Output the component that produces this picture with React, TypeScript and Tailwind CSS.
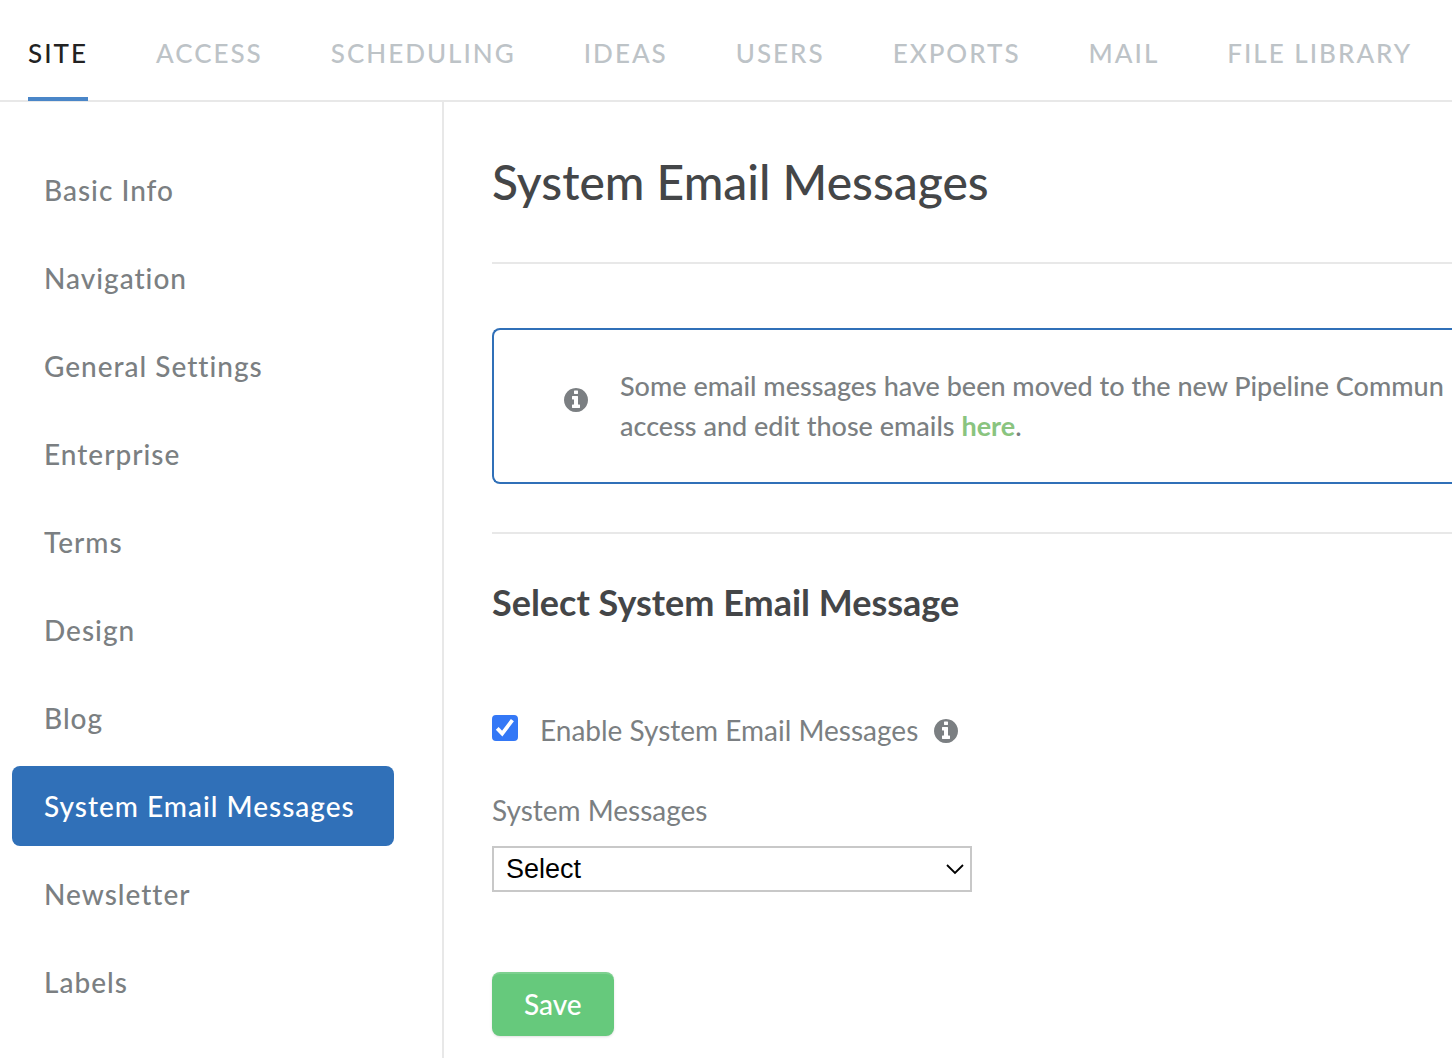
import * as React from "react";

const TABS = ["Site", "Access", "Scheduling", "Ideas", "Users", "Exports", "Mail", "File Library"];

const SECTIONS = [
  "Basic Info",
  "Navigation",
  "General Settings",
  "Enterprise",
  "Terms",
  "Design",
  "Blog",
  "System Email Messages",
  "Newsletter",
  "Labels",
];

function InfoIcon({ className }: { className?: string }) {
  return (
    <svg viewBox="128 128 1536 1536" fill="currentColor" aria-hidden="true" className={className}>
      <path d="M1152 1376v-160q0-14-9-23t-23-9h-96v-512q0-14-9-23t-23-9h-320q-14 0-23 9t-9 23v160q0 14 9 23t23 9h96v320h-96q-14 0-23 9t-9 23v160q0 14 9 23t23 9h448q14 0 23-9t9-23zM1024 480v-160q0-14-9-23t-23-9h-192q-14 0-23 9t-9 23v160q0 14 9 23t23 9h192q14 0 23-9t9-23zM1664 896q0 209-103 385.5t-279.5 279.5-385.5 103-385.5-103-279.5-279.5-103-385.5 103-385.5 279.5-279.5 385.5-103 385.5 103 279.5 279.5 103 385.5z" />
    </svg>
  );
}

function TopTabs({ active }: { active: string }) {
  return (
    <nav className="flex gap-[68px] border-b-2 border-[#e8e8e8] pl-7 text-[26px] leading-[34px] font-medium tracking-[2px] uppercase">
      {TABS.map((tab) => (
        <a
          key={tab}
          href="#"
          className={
            tab === active
              ? "-mb-px shrink-0 border-b-4 border-[#4a86c8] pt-9 pb-[27px] text-[#222]"
              : "shrink-0 pt-9 text-[#bdc3c7]"
          }
        >
          {tab}
        </a>
      ))}
    </nav>
  );
}

function Sidebar({ active }: { active: string }) {
  return (
    <aside className="w-[444px] shrink-0 border-r-2 border-[#e8e8e8] pt-12 pr-12 pl-3">
      <ul className="flex flex-col gap-2 text-[28px] leading-10 font-medium tracking-[1px]">
        {SECTIONS.map((section) => (
          <li key={section}>
            <a
              href="#"
              className={
                section === active
                  ? "block rounded-lg bg-[#3070b8] px-8 py-5 text-white"
                  : "block rounded-lg px-8 py-5"
              }
            >
              {section}
            </a>
          </li>
        ))}
      </ul>
    </aside>
  );
}

function Notice() {
  return (
    <div className="flex gap-8 rounded-l-lg border-2 border-r-0 border-[#3070b8] py-9 pl-[70px]">
      <InfoIcon className="mt-[22px] size-6 shrink-0" />
      <p className="text-[27px] leading-10 font-medium whitespace-nowrap">
        Some email messages have been moved to the new Pipeline Commun
        <br />
        access and edit those emails{" "}
        <a href="#" className="font-bold text-[#8ac47f]">
          here
        </a>
        .
      </p>
    </div>
  );
}

export default function App() {
  const [enabled, setEnabled] = React.useState(true);

  return (
    <div className="flex min-h-screen flex-col overflow-hidden bg-white font-[Lato,sans-serif] text-[#7b7f82]">
      <TopTabs active="Site" />
      <div className="flex flex-1">
        <Sidebar active="System Email Messages" />
        <main className="min-w-0 flex-1 pt-12 pl-12 text-[28px] leading-10">
          <h1 className="mb-16 border-b-2 border-[#e8e8e8] pb-12 text-5xl leading-16 font-medium text-[#444648]">
            System Email Messages
          </h1>

          <Notice />

          <form className="mt-12 border-t-2 border-[#e8e8e8] pt-12" onSubmit={(e) => e.preventDefault()}>
            <h2 className="text-4xl leading-10 font-bold text-[#444648]">Select System Email Message</h2>

            <div className="mt-22 flex items-start">
              <span className="relative mt-[5px] mr-[22px] size-[26px]">
                <input
                  id="enable"
                  type="checkbox"
                  checked={enabled}
                  onChange={(e) => setEnabled(e.target.checked)}
                  className="block size-full appearance-none rounded border-2 border-[#767676] checked:border-[#3478f6] checked:bg-[#3478f6]"
                />
                {enabled && (
                  <svg
                    viewBox="0 0 26 26"
                    fill="none"
                    stroke="white"
                    strokeWidth="3.8"
                    aria-hidden="true"
                    className="pointer-events-none absolute inset-0"
                  >
                    <path d="M5.2 13.4L10.2 18.6L20.4 5.2" />
                  </svg>
                )}
              </span>
              <label htmlFor="enable">Enable System Email Messages</label>
              <InfoIcon className="mt-[9px] ml-4 size-6" />
            </div>

            <label htmlFor="message" className="mt-10 block">
              System Messages
            </label>
            <div className="relative mt-4 w-[480px]">
              <select
                id="message"
                className="block h-[46px] w-full appearance-none border-2 border-[#c8c8c8] bg-white px-3 font-['Liberation_Sans',sans-serif] text-[27px] leading-[42px] text-black"
              >
                <option>Select</option>
              </select>
              <svg
                viewBox="0 0 20 12"
                fill="none"
                stroke="black"
                strokeWidth="1.8"
                aria-hidden="true"
                className="pointer-events-none absolute top-[17px] right-[7px] h-3 w-5"
              >
                <path d="M2 2L10 10L18 2" />
              </svg>
            </div>

            <button
              type="submit"
              className="mt-20 block rounded-lg border-t-2 border-[#7dd08f] bg-[#66c97c] px-8 pt-2.5 pb-3 font-medium text-white shadow-sm"
            >
              Save
            </button>
          </form>
        </main>
      </div>
    </div>
  );
}
